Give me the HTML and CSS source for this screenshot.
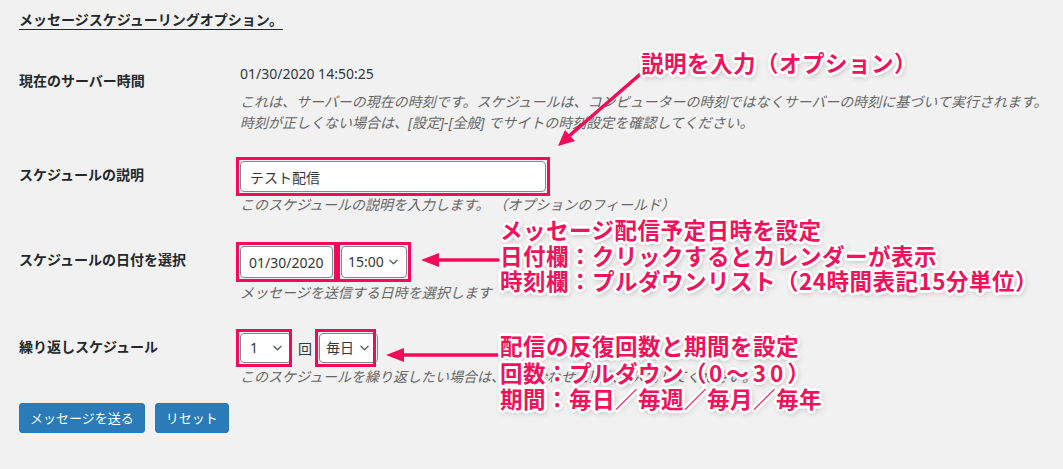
FILE: index.html
```html
<!DOCTYPE html>
<html lang="ja">
<head>
<meta charset="utf-8">
<title>メッセージスケジューリングオプション</title>
<link rel="stylesheet" href="styles.css">
</head>
<body>
<div class="page">
  <h2 class="title">メッセージスケジューリングオプション。</h2>

  <div class="row row-time">
    <div class="label">現在のサーバー時間</div>
    <div class="field">
      <div class="value">01/30/2020 14:50:25</div>
      <p class="desc">これは、サーバーの現在の時刻です。スケジュールは、コンピューターの時刻ではなくサーバーの時刻に基づいて実行されます。<br>時刻が正しくない場合は、[設定]-[全般] でサイトの時刻設定を確認してください。</p>
    </div>
  </div>

  <div class="row row-desc">
    <div class="label">スケジュールの説明</div>
    <div class="field">
      <div class="controls">
        <span class="hl"><input class="text-input" type="text" value="テスト配信"></span>
      </div>
      <p class="desc">このスケジュールの説明を入力します。 （オプションのフィールド）</p>
    </div>
  </div>

  <div class="row row-date">
    <div class="label">スケジュールの日付を選択</div>
    <div class="field">
      <div class="controls controls-date">
        <span class="hl"><input class="text-input date-input" type="text" value="01/30/2020"></span>
        <span class="hl"><span class="select sel-time"><span>15:00</span><svg viewBox="0 0 10 6" class="chev"><path d="M1 1 L5 5 L9 1"/></svg></span></span>
      </div>
      <p class="desc">メッセージを送信する日時を選択します</p>
    </div>
  </div>

  <div class="row row-repeat">
    <div class="label">繰り返しスケジュール</div>
    <div class="field">
      <div class="controls">
        <span class="hl"><span class="select sel-count"><span>1</span><svg viewBox="0 0 10 6" class="chev"><path d="M1 1 L5 5 L9 1"/></svg></span></span>
        <span class="kai">回</span>
        <span class="hl"><span class="select sel-period"><span>毎日</span><svg viewBox="0 0 10 6" class="chev"><path d="M1 1 L5 5 L9 1"/></svg></span></span>
      </div>
      <p class="desc">このスケジュールを繰り返したい場合は、組み合わせと回数を入力してください。</p>
    </div>
  </div>

  <div class="actions">
    <button class="btn" type="button">メッセージを送る</button>
    <button class="btn" type="button">リセット</button>
  </div>

  <svg class="arrows" width="1063" height="469" viewBox="0 0 1063 469">
    <g class="arrow-lines">
      <line x1="652" y1="64" x2="569" y2="136"/>
      <line x1="436" y1="260" x2="498" y2="260"/>
      <line x1="401" y1="355" x2="498" y2="355"/>
    </g>
    <g class="arrow-heads">
      <polygon points="558,146 575,141 565,130"/>
      <polygon points="421,260 439,253 439,267"/>
      <polygon points="386,355 404,348 404,362"/>
    </g>
  </svg>

  <div class="note note-1">説明を入力（オプション）</div>
  <div class="note note-2">メッセージ配信予定日時を設定<br>日付欄：クリックするとカレンダーが表示<br>時刻欄：プルダウンリスト（24時間表記15分単位）</div>
  <div class="note note-3">配信の反復回数と期間を設定<br>回数：プルダウン（<span class="range">0～30</span>）<br>期間：毎日／毎週／毎月／毎年</div>
</div>
</body>
</html>
```

FILE: styles.css
```css
html, body {
  margin: 0;
  background: #f1f1f1;
}

body {
  font-family: "Noto Sans", "Noto Sans CJK JP", sans-serif;
  font-size: 14px;
  color: #23282d;
}

.page {
  position: relative;
  width: 1063px;
  height: 469px;
  padding: 10px 0 0 19px;
  box-sizing: border-box;
  overflow: hidden;
}

.title {
  margin: 0;
  font-size: 14px;
  font-weight: 700;
  line-height: 20px;
  text-decoration: underline;
  text-decoration-thickness: 1px;
  text-underline-offset: 4px;
}

.row {
  display: flex;
}

.label {
  width: 221px;
  flex: none;
  font-weight: 700;
  line-height: 20px;
  padding-top: 4px;
  color: #23282d;
}

.field {
  flex: 1;
  min-width: 0;
}

.value {
  line-height: 20px;
  color: #32373c;
}

.desc {
  margin: 0;
  color: #666;
  font-style: italic;
  line-height: 20px;
  white-space: nowrap;
}

.row-time { margin-top: 34px; }
.row-time .label { padding-top: 7px; }
.row-time .desc { margin-top: 7px; line-height: 21px; }

.row-desc { margin-top: 28px; }
.row-desc .desc { margin-top: 3px; }

.row-date { margin-top: 31px; }
.row-date .desc { margin-top: 5px; }

.row-repeat { margin-top: 30px; }
.row-repeat .desc { margin-top: 4px; }

.controls {
  display: flex;
  align-items: center;
}

.controls-date {
  gap: 8px;
}

.hl {
  position: relative;
  display: flex;
  padding: 4px;
  margin: -4px;
}

.hl::after {
  content: "";
  position: absolute;
  inset: 0;
  border: 3px solid #f30b5a;
  z-index: 2;
  pointer-events: none;
}

.text-input {
  width: 306px;
  height: 31px;
  box-sizing: border-box;
  margin: 0;
  padding: 0 9px;
  border: 1px solid #7e8993;
  border-radius: 4px;
  background: #fff;
  color: #32373c;
  font-family: "Noto Sans", "Noto Sans CJK JP", sans-serif;
  font-size: 14px;
}

.date-input {
  width: 93px;
  height: 32px;
  padding: 0 8px;
}

.select {
  display: flex;
  align-items: center;
  justify-content: space-between;
  box-sizing: border-box;
  height: 30px;
  padding: 0 8px 0 9px;
  border: 1px solid #7e8993;
  border-radius: 4px;
  background: #fff;
  color: #32373c;
  line-height: 20px;
}

.chev {
  width: 9px;
  height: 6px;
  fill: none;
  stroke: #555d66;
  stroke-width: 1.4;
  stroke-linecap: round;
  stroke-linejoin: round;
}

.sel-time {
  width: 66px;
  height: 32px;
  padding-left: 6px;
}

.sel-count {
  width: 51px;
  margin-right: -3px;
}

.sel-period {
  width: 59px;
  margin-right: -6px;
  padding-left: 6px;
}

.kai {
  margin: 0 7px 0 10px;
  color: #32373c;
}

.actions {
  display: flex;
  gap: 10px;
  margin-top: 16px;
}

.btn {
  height: 30px;
  margin: 0;
  padding: 0 10px;
  border: 1px solid #2a7ab8;
  border-radius: 3px;
  background: #2b7bb9;
  color: #fff;
  font-family: "Noto Sans", "Noto Sans CJK JP", sans-serif;
  font-size: 13px;
  line-height: 28px;
}

.arrows {
  position: absolute;
  left: 0;
  top: 0;
  z-index: 3;
  pointer-events: none;
}

.arrow-lines line {
  stroke: #f30b5a;
  stroke-width: 3.5;
  stroke-linecap: round;
}

.arrow-heads polygon {
  fill: #f30b5a;
}

.note {
  position: absolute;
  z-index: 4;
  color: #f1125b;
  font-family: "Noto Sans CJK JP", sans-serif;
  font-weight: 700;
  font-size: 22.5px;
  letter-spacing: 0.5px;
  white-space: nowrap;
  text-shadow:
    2px 0 0 #fff, -2px 0 0 #fff, 0 2px 0 #fff, 0 -2px 0 #fff,
    2px 2px 0 #fff, -2px 2px 0 #fff, 2px -2px 0 #fff, -2px -2px 0 #fff,
    3px 0 0 #fff, -3px 0 0 #fff, 0 3px 0 #fff, 0 -3px 0 #fff,
    1px 2px 6px rgba(0, 0, 0, 0.45);
}

.range {
  letter-spacing: 4px;
  padding-left: 2px;
}

.note-1 { left: 641px; top: 49px; line-height: 26px; }
.note-2 { left: 500px; top: 217px; line-height: 25.5px; }
.note-3 { left: 500px; top: 332px; line-height: 26.5px; }
```
